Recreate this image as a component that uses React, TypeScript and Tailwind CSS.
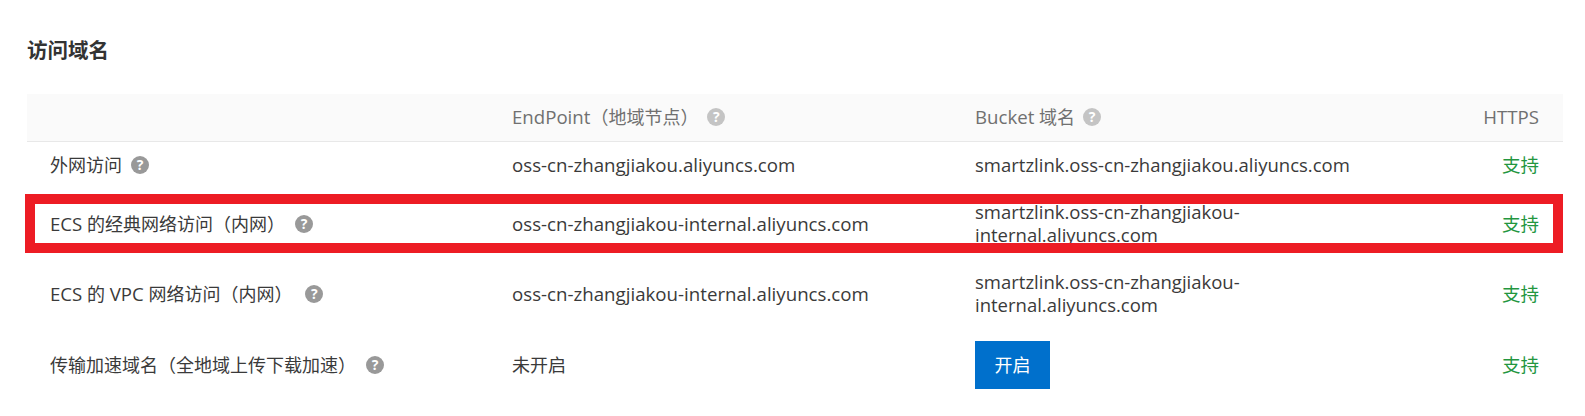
import React from 'react'

const grid = 'grid grid-cols-[462px_463px_1fr_auto] items-center pl-[23px] pr-[24px]'

function Help({ header = false }: { header?: boolean }) {
    return (
        <span className={`flex items-center justify-center shrink-0 w-[18px] h-[18px] rounded-full text-white text-[14px] leading-none font-bold ${header ? 'bg-[#c4c4c4]' : 'bg-[#999999]'}`}>?</span>
    )
}

function Latin({ children }: { children: React.ReactNode }) {
    return <span className='text-[18.65px]'>{children}</span>
}

function Support() {
    return <div className='text-[18.5px] text-[#23963f]'>支持</div>
}

function Bucket({ text }: { text: string }) {
    return <div className='max-w-[395px] mb-[2px] leading-[23px] text-[18.5px]'>{text}</div>
}

function App() {
    return (
        <div className='w-[1585px] h-[416px] overflow-hidden bg-white text-[#3a3a3a] text-[18px] font-["Open_Sans","Noto_Sans_CJK_SC",sans-serif]'>
            <div className='pl-[27px] pr-[22px]'>
                <h2 className='h-[94px] pt-[36px] text-[20.5px] leading-[28px] font-bold text-[#333333]'>访问域名</h2>
                <div className='relative'>
                    <div className={`${grid} h-[48px] pb-[2px] bg-[#fafafa] border-b border-[#e8e8e8] text-[#707070]`}>
                        <div></div>
                        <div className='flex items-center gap-[9px]'>
                            <span><Latin>EndPoint</Latin>（地域节点）</span>
                            <Help header />
                        </div>
                        <div className='flex items-center gap-[8px]'>
                            <span><Latin>Bucket</Latin> 域名</span>
                            <Help header />
                        </div>
                        <div className='text-[18.65px]'>HTTPS</div>
                    </div>
                    <div className={`${grid} h-[46px]`}>
                        <div className='flex items-center gap-[9px]'>
                            <span>外网访问</span>
                            <Help />
                        </div>
                        <div className='text-[18.7px]'>oss-cn-zhangjiakou.aliyuncs.com</div>
                        <Bucket text='smartzlink.oss-cn-zhangjiakou.aliyuncs.com' />
                        <Support />
                    </div>
                    <div className={`${grid} h-[72px]`}>
                        <div className='flex items-center gap-[10px]'>
                            <span><Latin>ECS</Latin> 的经典网络访问（内网）</span>
                            <Help />
                        </div>
                        <div className='text-[18.7px]'>oss-cn-zhangjiakou-internal.aliyuncs.com</div>
                        <Bucket text='smartzlink.oss-cn-zhangjiakou-internal.aliyuncs.com' />
                        <Support />
                    </div>
                    <div className={`${grid} h-[68px]`}>
                        <div className='flex items-center gap-[13px]'>
                            <span><Latin>ECS</Latin> 的 <Latin>VPC</Latin> 网络访问（内网）</span>
                            <Help />
                        </div>
                        <div className='text-[18.7px]'>oss-cn-zhangjiakou-internal.aliyuncs.com</div>
                        <Bucket text='smartzlink.oss-cn-zhangjiakou-internal.aliyuncs.com' />
                        <Support />
                    </div>
                    <div className={`${grid} h-[74px]`}>
                        <div className='flex items-center gap-[10px]'>
                            <span>传输加速域名（全地域上传下载加速）</span>
                            <Help />
                        </div>
                        <div>未开启</div>
                        <div>
                            <button type='button' className='w-[75px] h-[48px] bg-[#0070cc] text-white'>开启</button>
                        </div>
                        <Support />
                    </div>
                    {/* red highlight drawn on top of the row */}
                    <div className='absolute left-[-2px] top-[100px] w-[1538px] h-[59px] border-[10px] border-[#ed1c24]'></div>
                </div>
            </div>
        </div>
    )
}

export default App
